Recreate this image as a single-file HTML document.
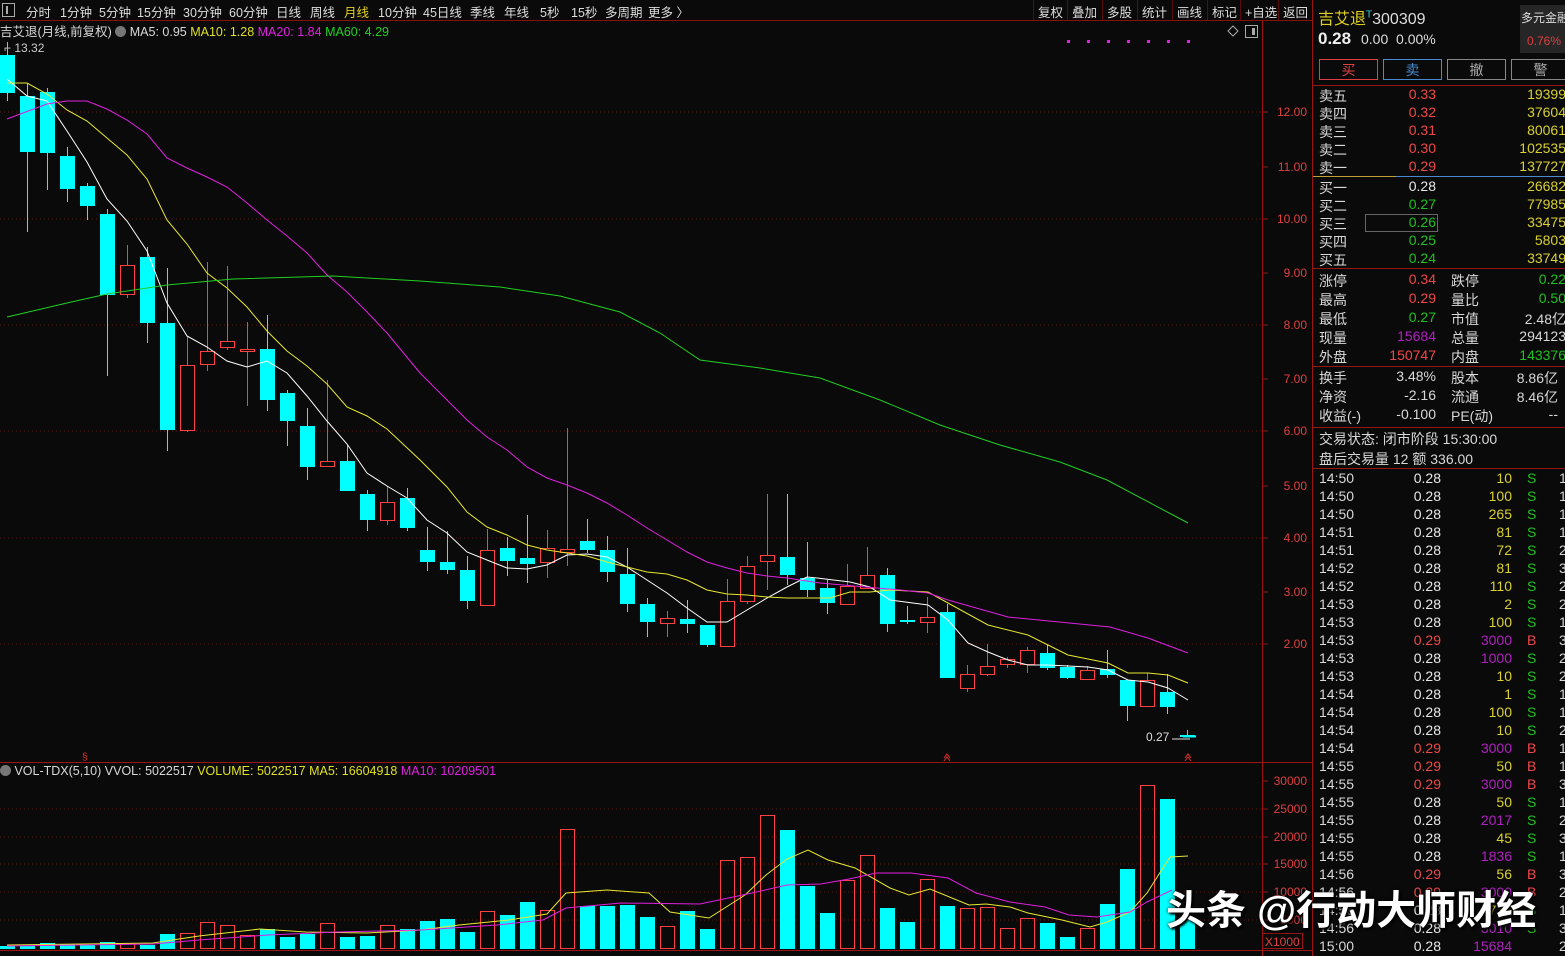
<!DOCTYPE html>
<html><head><meta charset="utf-8">
<style>
*{margin:0;padding:0;box-sizing:border-box}
body{width:1565px;height:956px;background:#0a0a0a;overflow:hidden;position:relative;font-family:"Liberation Sans","Noto Sans CJK SC",sans-serif;color:#d8d8d8}
.a{position:absolute;white-space:nowrap}
#tb{position:absolute;left:0;top:0;width:1313px;height:21px;border-bottom:1px solid #8a1010;font-size:12.5px;color:#ddd}
#tb span{position:absolute;top:2px}
.btn{position:absolute;top:0;height:20px;border-left:1px solid #5a0c0c;font-size:12.5px;color:#ddd;padding:2px 0 0 4px}
.rp{font-size:14px}
.r{text-align:right}
.hl{position:absolute;left:1313px;width:252px;height:1px;background:#9a1414}
.red{color:#f04848}.grn{color:#20c020}.yel{color:#d8d030}.mag{color:#b020c0}.wht{color:#e8e8e8}
</style></head><body>
<div id="tb">
<div class="a" style="left:2px;top:3px;width:13px;height:14px;border:1px solid #aaa"></div>
<div class="a" style="left:6px;top:6px;width:2px;height:8px;background:#aaa"></div>
<span style="left:26px">分时</span><span style="left:60px">1分钟</span><span style="left:99px">5分钟</span><span style="left:137px">15分钟</span><span style="left:183px">30分钟</span><span style="left:229px">60分钟</span><span style="left:276px">日线</span><span style="left:310px">周线</span><span style="left:344px;color:#e0d020">月线</span><span style="left:378px">10分钟</span><span style="left:423px">45日线</span><span style="left:470px">季线</span><span style="left:504px">年线</span><span style="left:540px">5秒</span><span style="left:571px">15秒</span><span style="left:605px">多周期</span><span style="left:648px">更多 〉</span>
<div class="btn" style="left:1033px">复权</div><div class="btn" style="left:1067px">叠加</div><div class="btn" style="left:1102px">多股</div><div class="btn" style="left:1137px">统计</div><div class="btn" style="left:1172px">画线</div><div class="btn" style="left:1207px">标记</div><div class="btn" style="left:1240px">+自选</div><div class="btn" style="left:1278px;border-right:1px solid #5a0c0c;width:35px">返回</div>
</div>
<div class="a" style="left:0;top:21px;font-size:12.5px">吉艾退(月线,前复权) <span style="display:inline-block;width:11px;height:11px;border-radius:6px;background:#777;vertical-align:-1px"></span> MA5: 0.95 <span style="color:#e0e020">MA10: 1.28</span> <span style="color:#e020e0">MA20: 1.84</span> <span style="color:#20d020">MA60: 4.29</span></div>
<div class="a" style="left:4px;top:41px;font-size:12px;color:#ccc">⌐ 13.32</div>
<div class="a" style="left:0;top:764px;font-size:12.5px"><span style="display:inline-block;width:11px;height:11px;border-radius:6px;background:#777;vertical-align:-1px"></span> VOL-TDX(5,10) VVOL: 5022517 <span style="color:#e0e020">VOLUME: 5022517 MA5: 16604918</span> <span style="color:#e020e0">MA10: 10209501</span></div>
<svg id="ch" class="a" style="left:0;top:0" width="1313" height="956"></svg>
<div class="a" style="left:1146px;top:730px;font-size:12px;color:#ddd">0.27</div>

<div class="a" style="left:1312px;top:0;width:1px;height:956px;background:#9a1414"></div>
<div class="a" style="left:1318px;top:5px;font-size:16px;color:#e0d020">吉艾退<sup style="color:#30d0e0;font-size:10px">T</sup><span style="color:#ddd">300309</span></div>
<div class="a" style="left:1318px;top:29px;font-size:17px;font-weight:bold;color:#eee">0.28</div>
<div class="a" style="left:1361px;top:31px;font-size:14px;color:#ddd">0.00 &nbsp;0.00%</div>
<div class="a" style="left:1520px;top:5px;width:45px;height:48px;background:#262626"></div>
<div class="a" style="left:1521px;top:9px;font-size:12px;color:#ddd">多元金融</div>
<div class="a" style="left:1527px;top:34px;font-size:12px;color:#e04040">0.76%</div>
<div class="a" style="left:1319px;top:59px;width:59px;height:21px;border:1px solid #e04040;color:#e04040;text-align:center;font-size:14px">买</div>
<div class="a" style="left:1383px;top:59px;width:59px;height:21px;border:1px solid #4a8ad0;color:#4a8ad0;text-align:center;font-size:14px">卖</div>
<div class="a" style="left:1447px;top:59px;width:59px;height:21px;border:1px solid #888;color:#aaa;text-align:center;font-size:14px">撤</div>
<div class="a" style="left:1511px;top:59px;width:59px;height:21px;border:1px solid #888;color:#aaa;text-align:center;font-size:14px">警</div>
<div class="hl" style="top:85px"></div>
<div class="a" style="left:1313px;top:176px;width:83px;height:1px;background:#c0a030"></div>
<div class="a" style="left:1396px;top:176px;width:169px;height:1px;background:#4a8ad0"></div>
<div class="a" style="left:1365px;top:214px;width:73px;height:18px;border:1px solid #666"></div>
<div class="hl" style="top:268px"></div>
<div class="hl" style="top:366px"></div>
<div class="hl" style="top:427px"></div>
<div class="hl" style="top:468px"></div>
<div id="rp"></div>

<div class="a" style="left:1166px;top:878px;font-size:40px;font-weight:bold;color:#fff;text-shadow:0 0 3px #000,2px 2px 2px #000">头条 @行动大师财经</div>

<script>
var C=[[55,93,42,101,0],[96,152,83,232,0],[92,153,88,190,0],[156,189,147,202,0],[186,206,183,220,0],[214,295,209,376,0],[265,294,245,298,1],[257,323,247,343,0],[323,430,268,451,0],[365,430,336,432,1],[351,364,262,371,1],[341,347,266,350,1],[349,351,322,406,1],[349,400,315,411,0],[393,421,390,446,0],[426,467,408,480,0],[461,466,380,466,1],[461,491,445,491,0],[494,520,490,531,0],[502,520,486,525,1],[498,528,488,531,0],[550,562,527,571,0],[562,570,531,574,0],[570,601,556,609,0],[550,605,529,605,1],[548,561,537,576,0],[558,564,515,583,0],[548,562,530,578,1],[549,552,428,566,1],[541,550,519,553,0],[550,572,536,582,0],[574,604,548,612,0],[604,622,598,637,0],[618,623,611,637,1],[619,624,600,633,0],[625,645,625,647,0],[601,646,579,646,1],[566,601,556,604,1],[555,561,494,590,1],[557,575,494,585,0],[578,590,542,597,0],[588,603,580,614,0],[586,604,564,604,1],[575,588,547,588,1],[575,624,568,632,0],[620,622,606,624,0],[617,622,597,633,1],[612,678,604,678,0],[674,688,665,692,1],[666,674,644,676,1],[659,664,657,668,1],[650,664,647,673,1],[653,668,645,670,0],[667,678,665,679,0],[670,679,666,679,1],[669,675,650,678,0],[680,706,680,721,0],[680,706,673,706,1],[692,707,674,714,0],[735,737,730,737,0]];
var V=[946,946,943,944,945,942,943,945,934,933,922,925,935,929,937,934,923,937,936,925,929,921,919,932,911,915,902,910,829,906,906,905,917,926,911,929,860,857,815,830,886,913,880,855,908,922,879,906,908,907,928,918,923,937,928,904,869,785,799,920];
var s='';
[112,219,325,431,538,644].forEach(function(y){s+='<line x1="0" x2="1262" y1="'+y+'" y2="'+y+'" stroke="#5a1818" stroke-dasharray="1,3"/>'});
[809,837,864,892,920].forEach(function(y){s+='<line x1="0" x2="1262" y1="'+y+'" y2="'+y+'" stroke="#5a1818" stroke-dasharray="1,3"/>'});
s+='<line x1="0" x2="1313" y1="762.5" y2="762.5" stroke="#9a1414"/><line x1="0" x2="1313" y1="950.5" y2="950.5" stroke="#9a1414"/><line x1="1262.5" x2="1262.5" y1="21" y2="956" stroke="#9a1414"/>';
var lab=[[112,'12.00'],[167,'11.00'],[219,'10.00'],[273,'9.00'],[325,'8.00'],[379,'7.00'],[431,'6.00'],[486,'5.00'],[538,'4.00'],[592,'3.00'],[644,'2.00']];
lab.forEach(function(l){s+='<line x1="1262" x2="1268" y1="'+l[0]+'" y2="'+l[0]+'" stroke="#9a1414"/><text x="1307" y="'+(l[0]+4)+'" fill="#e04040" font-size="12" text-anchor="end" font-family="Liberation Sans">'+l[1]+'</text>'});
[[781,'30000'],[809,'25000'],[837,'20000'],[864,'15000'],[892,'10000'],[920,'5000']].forEach(function(l){s+='<line x1="1262" x2="1268" y1="'+l[0]+'" y2="'+l[0]+'" stroke="#9a1414"/><text x="1307" y="'+(l[0]+4)+'" fill="#e04040" font-size="12" text-anchor="end" font-family="Liberation Sans">'+l[1]+'</text>'});
s+='<rect x="1262.5" y="933.5" width="40" height="15" fill="none" stroke="#9a1414"/><text x="1265" y="946" fill="#e04040" font-size="12" font-family="Liberation Sans">X1000</text>';
C.forEach(function(c,i){var x=7+20*i;var col=c[4]?'#ff4040':'#00ffff';
s+='<line x1="'+(x+.5)+'" x2="'+(x+.5)+'" y1="'+c[2]+'" y2="'+c[3]+'" stroke="'+col+'"/>';
if(c[4]) s+='<rect x="'+(x-6.5)+'" y="'+(c[0]+.5)+'" width="14" height="'+Math.max(1,c[1]-c[0])+'" fill="#0a0a0a" stroke="'+col+'"/>';
else s+='<rect x="'+(x-7)+'" y="'+c[0]+'" width="15" height="'+Math.max(2,c[1]-c[0])+'" fill="'+col+'"/>';
var vy=V[i];
if(c[4]) s+='<rect x="'+(x-6.5)+'" y="'+(vy+.5)+'" width="14" height="'+(948-vy)+'" fill="none" stroke="#ff4040"/>';
else s+='<rect x="'+(x-7)+'" y="'+vy+'" width="15" height="'+(949-vy)+'" fill="#00ffff"/>';
});
function pl(p,col){s+='<polyline fill="none" stroke="'+col+'" stroke-width="1" points="'+p+'"/>'}
pl('7,79 27,96 47,101 67,131 87,162 107,199 127,221 147,251 167,303 187,336 207,347 227,361 247,367 267,361 287,373 307,396 327,421 347,444 367,473 387,486 407,498 427,520 447,533 467,552 487,560 507,568 527,569 547,565 567,555 587,554 607,557 627,567 647,580 667,593 687,608 707,622 727,622 747,610 767,598 787,587 807,577 817,578 850,582 870,587 890,600 928,605 948,620 968,643 988,652 1008,660 1028,665 1048,665 1068,666 1088,667 1108,670 1128,680 1148,682 1168,688 1188,700','#ffffff');
pl('7,83 27,83 47,94 67,110 87,121 107,138 127,155 147,179 167,220 187,244 207,273 227,288 247,307 267,331 287,351 307,366 327,384 347,407 367,416 387,429 420,460 447,487 467,512 487,527 507,535 527,545 547,550 567,553 587,556 607,562 627,567 647,572 667,574 687,580 707,590 727,594 747,595 767,597 787,598 830,598 850,592 870,592 890,590 928,592 948,603 988,625 1028,635 1048,645 1068,655 1108,663 1128,673 1148,673 1168,675 1188,683','#e8e830');
pl('7,119 47,104 67,101 87,101 107,109 127,120 147,134 167,158 187,168 207,177 227,187 247,203 267,220 287,236 307,253 327,275 347,292 367,312 387,333 420,373 467,420 487,437 507,450 527,467 547,478 567,485 587,493 607,503 627,515 647,528 667,540 687,552 707,562 727,568 747,573 767,576 787,578 820,583 900,590 928,593 948,600 1008,617 1110,627 1148,638 1188,653','#e020e0');
pl('7,317 67,303 107,294 167,285 233,279 333,276 420,281 500,287 560,296 620,312 660,333 700,360 760,368 820,378 880,400 940,425 1000,445 1060,462 1107,480 1188,523','#20d020');
pl('7,945 153,943 199,936 260,929 306,932 367,933 421,930 459,925 509,920 547,914 566,893 607,890 649,893 670,912 709,918 745,895 766,875 787,859 808,850 828,860 855,868 890,888 909,895 930,889 969,905 986,904 1010,907 1028,913 1062,920 1090,927 1107,922 1130,912 1147,893 1170,857 1188,856','#e8e830');
pl('7,946 153,944 199,940 268,935 337,932 421,930 497,925 543,920 566,908 621,903 700,904 752,893 787,885 821,884 849,879 876,873 911,873 948,878 976,893 1010,902 1045,907 1069,915 1097,917 1130,912 1147,902 1172,890','#e020e0');
for(var k=0;k<7;k++) s+='<rect x="'+(1067+20*k)+'" y="40" width="3" height="3" fill="#e020e0"/>';
s+='<path d="M1233 26 L1238 31 L1233 36 L1228 31 Z" fill="none" stroke="#aaa"/><rect x="1245.5" y="25.5" width="12" height="12" fill="none" stroke="#aaa"/><rect x="1252" y="28" width="3" height="7" fill="#aaa"/>';
s+='<text x="82" y="760" fill="#e03030" font-size="10">§</text><path d="M944 758 L947 754 L950 758 M944 761 L947 757 L950 761" stroke="#e03030" fill="none"/><path d="M1185 758 L1188 754 L1191 758 M1185 761 L1188 757 L1191 761" stroke="#e03030" fill="none"/>';
s+='<line x1="1172" x2="1190" y1="739" y2="739" stroke="#ddd"/><line x1="1183" x2="1196" y1="736.5" y2="736.5" stroke="#00ffff" stroke-width="2"/>';
document.getElementById('ch').innerHTML=s;

var h='';
function t(x,y,txt,cls,al){h+='<div class="a rp '+(cls||'')+'" style="'+(al?'right:'+(1565-x)+'px':'left:'+x+'px')+';top:'+(y-9)+'px">'+txt+'</div>'}
var ob=[['卖五','0.33','19399','red'],['卖四','0.32','37604','red'],['卖三','0.31','80061','red'],['卖二','0.30','102535','red'],['卖一','0.29','137727','red']];
ob.forEach(function(r,i){var y=95+18*i;t(1319,y,r[0]);t(1436,y,r[1],r[3],1);t(1566,y,r[2],'yel',1)});
var bb=[['买一','0.28','26682','wht'],['买二','0.27','77985','grn'],['买三','0.26','33475','grn'],['买四','0.25','5803','grn'],['买五','0.24','33749','grn']];
bb.forEach(function(r,i){var y=187+18*i;t(1319,y,r[0]);t(1436,y,r[1],r[3],1);t(1566,y,r[2],'yel',1)});
var st=[['涨停','0.34','red','跌停','0.22','grn'],['最高','0.29','red','量比','0.50','grn'],['最低','0.27','grn','市值','2.48亿',''],['现量','15684','mag','总量','294123',''],['外盘','150747','red','内盘','143376','grn']];
st.forEach(function(r,i){var y=280+19*i;t(1319,y,r[0]);t(1436,y,r[1],r[2],1);t(1451,y,r[3]);t(1566,y,r[4],r[5],1)});
var s2=[['换手','3.48%','股本','8.86亿'],['净资','-2.16','流通','8.46亿'],['收益(-)','-0.100','PE(动)','--']];
s2.forEach(function(r,i){var y=377+19*i;t(1319,y,r[0]);t(1436,y,r[1],'',1);t(1451,y,r[2]);t(1558,y,r[3],'',1)});
t(1319,438,'交易状态: 闭市阶段 15:30:00');t(1319,458,'盘后交易量 12 额 336.00');
var tk=[['14:50','0.28','10','S'],['14:50','0.28','100','S'],['14:50','0.28','265','S'],['14:51','0.28','81','S'],['14:51','0.28','72','S'],['14:52','0.28','81','S'],['14:52','0.28','110','S'],['14:53','0.28','2','S'],['14:53','0.28','100','S'],['14:53','0.29','3000','B'],['14:53','0.28','1000','S'],['14:53','0.28','10','S'],['14:54','0.28','1','S'],['14:54','0.28','100','S'],['14:54','0.28','10','S'],['14:54','0.29','3000','B'],['14:55','0.29','50','B'],['14:55','0.29','3000','B'],['14:55','0.28','50','S'],['14:55','0.28','2017','S'],['14:55','0.28','45','S'],['14:55','0.28','1836','S'],['14:56','0.29','56','B'],['14:56','0.29','3000','B'],['14:56','0.28','775','S'],['14:56','0.28','3010','S'],['15:00','0.28','15684','']];
var last='11112322132211211312313213283';
tk.forEach(function(r,i){var y=479+18*i;t(1319,y,r[0]);t(1441,y,r[1],r[1]=='0.29'?'red':'wht',1);t(1512,y,r[2],(+r[2]>=1000)?'mag':'yel',1);if(r[3])t(1527,y,r[3],r[3]=='B'?'red':'grn');t(1559,y,last[i],'',0)});
document.getElementById('rp').innerHTML=h;
</script>
</body></html>
